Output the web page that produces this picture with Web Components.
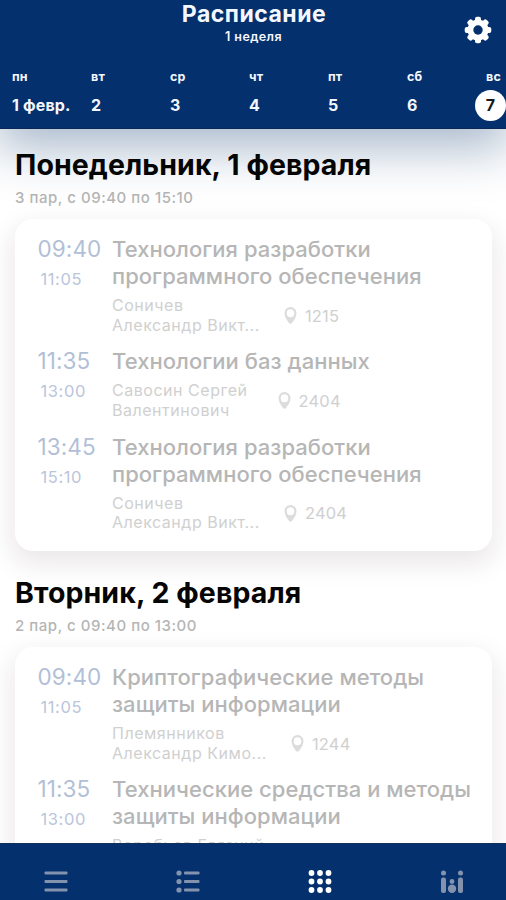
<!DOCTYPE html>
<html lang="ru">
<head>
<meta charset="utf-8">
<title>Расписание</title>
<style>
  body {
    margin: 0;
    height: 900px;
    overflow: hidden;
    background: #fff;
    font-family: Inter, "Liberation Sans", sans-serif;
  }
</style>
</head>
<body>
<schedule-app></schedule-app>

<script>
const WEEK = [
  ['пн', '1 февр.'], ['вт', '2'], ['ср', '3'], ['чт', '4'], ['пт', '5'], ['сб', '6'], ['вс', '7']
]

const DAYS = [
  {
    title: 'Понедельник, 1 февраля',
    info: '3 пар, с 09:40 по 15:10',
    lessons: [
      { start: '09:40', end: '11:05', name: 'Технология разработки<br>программного обеспечения', teacher: 'Соничев<br>Александр Викт...', room: '1215' },
      { start: '11:35', end: '13:00', name: 'Технологии баз данных', teacher: 'Савосин Сергей<br>Валентинович', room: '2404' },
      { start: '13:45', end: '15:10', name: 'Технология разработки<br>программного обеспечения', teacher: 'Соничев<br>Александр Викт...', room: '2404' }
    ]
  },
  {
    title: 'Вторник, 2 февраля',
    info: '2 пар, с 09:40 по 13:00',
    lessons: [
      { start: '09:40', end: '11:05', name: 'Криптографические методы<br>защиты информации', teacher: 'Племянников<br>Александр Кимо...', room: '1244' },
      { start: '11:35', end: '13:00', name: 'Технические средства и методы<br>защиты информации', teacher: 'Воробьев Евгений' }
    ]
  }
]

class AppHeader extends HTMLElement {
  static get style() {
    return /*css*/`
      :host {
        display: block;
        position: relative;
        flex: none;
        height: 128px;
        background: #04306d;
        color: #f4f7ff;
        box-shadow: 0 1px 0 #082656, 0 16px 50px 4px rgba(14, 58, 110, .36);
        z-index: 1;
      }
      .bar {
        display: grid;
        grid-template-columns: 60px 1fr 60px;
        height: 61px;
        border-bottom: 1px solid #062f67;
        box-sizing: border-box;
      }
      .titles {
        grid-column: 2;
        text-align: center;
      }
      h1 {
        margin: 0;
        padding-left: 2px;
        font-size: 23px;
        line-height: 29px;
        font-weight: 700;
        letter-spacing: .5px;
      }
      p {
        margin: 0;
        padding-left: 1px;
        font-size: 12.5px;
        line-height: 15px;
        font-weight: 600;
        letter-spacing: .4px;
      }
      svg {
        justify-self: center;
        margin: 16px 0 0 3px;
      }
    `
  }
  constructor() {
    super()
    this.attachShadow({ mode: 'open' })
    this.shadowRoot.innerHTML = /*html*/`
      <style>${AppHeader.style}</style>
      <div class="bar">
        <div class="titles">
          <h1><slot name="title"></slot></h1>
          <p><slot name="week"></slot></p>
        </div>
        <svg width="28" height="28" viewBox="0 0 28 28" aria-label="Настройки">
          <g fill="#fff">
            <rect x="11" y=".7" width="6" height="26.600" rx="2"/>
            <rect x="11" y=".7" width="6" height="26.600" rx="2" transform="rotate(45 14 14)"/>
            <rect x="11" y=".7" width="6" height="26.600" rx="2" transform="rotate(90 14 14)"/>
            <rect x="11" y=".7" width="6" height="26.600" rx="2" transform="rotate(135 14 14)"/>
            <circle cx="14" cy="14" r="10.5"/>
          </g>
          <circle cx="14" cy="14" r="4.7" fill="#04306d"/>
        </svg>
      </div>
      <slot></slot>
    `
  }
}

class WeekStrip extends HTMLElement {
  static get style() {
    return /*css*/`
      :host {
        display: grid;
        grid-template-columns: repeat(7, 79px);
        padding-left: 12px;
        overflow: hidden;
        height: 67px;
      }
      .day {
        white-space: nowrap;
        font-weight: 700;
      }
      .name {
        font-size: 12.5px;
        line-height: 16px;
        margin-top: 7.5px;
        letter-spacing: .2px;
      }
      .date {
        display: block;
        font-size: 16px;
        line-height: 31px;
        margin-top: 5.5px;
        letter-spacing: .15px;
      }
      .active .date {
        width: 31px;
        height: 31px;
        margin-left: -11px;
        border-radius: 50%;
        background: #fff;
        color: #17191d;
        text-align: center;
      }
    `
  }
  constructor() {
    super()
    this.attachShadow({ mode: 'open' })
    this.shadowRoot.innerHTML = /*html*/`
      <style>${WeekStrip.style}</style>
      ${WEEK.map(([name, date], i) => `
        <div class="day ${i === 6 ? 'active' : ''}">
          <div class="name">${name}</div>
          <span class="date">${date}</span>
        </div>`).join('')}
    `
  }
}

class LessonItem extends HTMLElement {
  static get style() {
    return /*css*/`
      :host {
        display: grid;
        grid-template-columns: 75px 1fr;
        margin-bottom: 13.3px;
      }
      .start {
        font-size: 22.5px;
        line-height: 26px;
        padding-left: .5px;
        letter-spacing: .1px;
        color: #b2bfd7;
      }
      .end {
        font-size: 16.5px;
        line-height: 20px;
        margin: 7px 0 0 3.5px;
        letter-spacing: .6px;
        color: #bac5db;
      }
      .name {
        font-size: 22px;
        line-height: 27px;
        letter-spacing: .04px;
        color: #b6b6b6;
        font-weight: 500;
        white-space: nowrap;
      }
      .details {
        display: flex;
        align-items: center;
        color: #d0d0d0;
        font-size: 16px;
        margin-top: 6px;
      }
      .teacher {
        min-width: 141.5px;
        min-height: 39px;
        line-height: 19.5px;
        letter-spacing: .53px;
        white-space: nowrap;
      }
      svg {
        margin: 0 8px 0 24px;
      }
      .room {
        font-size: 16.5px;
        letter-spacing: .2px;
      }
    `
  }
  constructor() {
    super()
    this.attachShadow({ mode: 'open' })
    this.shadowRoot.innerHTML = /*html*/`
      <style>${LessonItem.style}</style>
      <div>
        <div class="start"><slot name="start"></slot></div>
        <div class="end"><slot name="end"></slot></div>
      </div>
      <div>
        <div class="name"><slot name="name"></slot></div>
        <div class="details">
          <div class="teacher"><slot name="teacher"></slot></div>
          <svg width="13" height="17" viewBox="0 0 13 17">
            <path fill="#dcdcdc" fill-rule="evenodd" d="M6.500 0a6 6 0 0 1 6 6c0 4-2.500 7-4.500 10q-1.500 1.500-3 0C3 13 .5 10 .5 6a6 6 0 0 1 6-6zM6.500 2.200a3.800 4 0 1 0 0 8 3.800 4 0 0 0 0-8z"/>
          </svg>
          <div class="room"><slot name="room"></slot></div>
        </div>
      </div>
    `
  }
}

class DaySection extends HTMLElement {
  static get style() {
    return /*css*/`
      :host {
        display: block;
        margin: 0 14px 24px 15px;
      }
      h2 {
        position: relative;
        z-index: 2;
        margin: 0;
        font-size: 28.5px;
        line-height: 36px;
        font-weight: 700;
        letter-spacing: .09px;
        color: #050505;
        white-space: nowrap;
      }
      .info {
        font-size: 15px;
        line-height: 18px;
        margin-top: 6px;
        letter-spacing: .53px;
        font-weight: 500;
        color: #b5b5b5;
      }
      .card {
        margin-top: 12px;
        height: 332px;
        box-sizing: border-box;
        padding: 17.5px 0 0 22px;
        border-radius: 18px;
        background: #fff;
        box-shadow: 0 10px 26px 3px rgba(55, 20, 30, .1);
      }
    `
  }
  constructor() {
    super()
    this.attachShadow({ mode: 'open' })
    this.shadowRoot.innerHTML = /*html*/`
      <style>${DaySection.style}</style>
      <h2><slot name="title"></slot></h2>
      <div class="info"><slot name="info"></slot></div>
      <div class="card"><slot></slot></div>
    `
  }
}

class TabBar extends HTMLElement {
  static get style() {
    return /*css*/`
      :host {
        display: grid;
        grid-template-columns: repeat(4, 132px);
        justify-content: center;
        flex: none;
        position: relative;
        z-index: 3;
        height: 57px;
        box-sizing: border-box;
        padding-left: 1.5px;
        border-top: 1px solid #12305c;
        background: #04306d;
      }
      svg {
        justify-self: center;
        margin-top: 26px;
        fill: #8493ad;
      }
      .active {
        fill: #fff;
      }
    `
  }
  constructor() {
    super()
    this.attachShadow({ mode: 'open' })
    const steps = [3, 11.5, 20]
    this.shadowRoot.innerHTML = /*html*/`
      <style>${TabBar.style}</style>
      <svg width="24" height="24">
        ${steps.map(y => `<rect x=".5" y="${y - 1.5}" width="23" height="3" rx="1"/>`).join('')}
      </svg>
      <svg width="24" height="24">
        ${steps.map(y => `<circle cx="3" cy="${y}" r="2.600"/><rect x="8" y="${y - 1.5}" width="15.500" height="3" rx="1"/>`).join('')}
      </svg>
      <svg class="active" width="24" height="24">
        ${steps.map(y => steps.map(x => `<circle cx="${x + .5}" cy="${y}" r="2.900"/>`).join('')).join('')}
      </svg>
      <svg width="24" height="24">
        <circle cx="3.500" cy="3" r="2.500"/>
        <circle cx="20.500" cy="3" r="2.500"/>
        <rect x="1" y="7.500" width="5" height="15.500" rx="2"/>
        <rect x="18" y="7.500" width="5" height="15.500" rx="2"/>
        <circle cx="12" cy="11.500" r="2.400"/>
        <circle cx="12" cy="18.700" r="4.200"/>
      </svg>
    `
  }
}

class ScheduleApp extends HTMLElement {
  static get style() {
    return /*css*/`
      :host {
        display: flex;
        flex-direction: column;
        height: 900px;
        overflow: hidden;
      }
      main {
        flex: 1;
        min-height: 0;
        overflow: hidden;
        padding-top: 18.6px;
      }
    `
  }
  constructor() {
    super()
    this.attachShadow({ mode: 'open' })
    this.shadowRoot.innerHTML = /*html*/`
      <style>${ScheduleApp.style}</style>
      <app-header>
        <span slot="title">Расписание</span>
        <span slot="week">1 неделя</span>
        <week-strip></week-strip>
      </app-header>
      <main>
        ${DAYS.map(day => `
          <day-section>
            <span slot="title">${day.title}</span>
            <span slot="info">${day.info}</span>
            ${day.lessons.map(lesson => `
              <lesson-item>
                ${Object.entries(lesson).map(([key, value]) => `<span slot="${key}">${value}</span>`).join('')}
              </lesson-item>`).join('')}
          </day-section>`).join('')}
      </main>
      <tab-bar></tab-bar>
    `
  }
}

customElements.define('app-header', AppHeader)
customElements.define('week-strip', WeekStrip)
customElements.define('lesson-item', LessonItem)
customElements.define('day-section', DaySection)
customElements.define('tab-bar', TabBar)
customElements.define('schedule-app', ScheduleApp)
</script>
</body>
</html>
